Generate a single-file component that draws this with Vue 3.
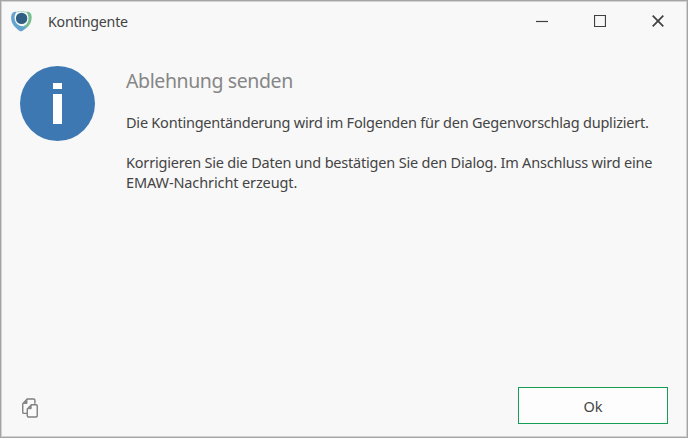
<script setup>
import { ref } from 'vue'

const title = ref('Kontingente')
const heading = ref('Ablehnung senden')
</script>

<template>
  <div class="dialog">
    <header class="titlebar">
      <svg class="logo" width="21" height="21" viewBox="0 0 21 21">
        <path d="M2 1.500C-.4 3.500-.4 8.500 1.200 12 3 16 6.500 18.200 9 20.200c1.500.3 2.600-.3 3.600-1.300 2-1 3.500-2.400 4-4.400-4.800 1.600-9.600.6-11.900-3.300C2.800 7.500 3.300 3.800 5.600.9 4 .5 2.900.8 2 1.500z" fill="#65a3cf" />
        <path d="M15 .9c2.500 2.400 3.200 6.400 1.900 9.800-.9 2.200-2.300 3.500-4.200 4.300l3.200 1.700c2-1.500 3.500-3.900 4.200-6.400 1-3.500.6-6.700-.9-8.500-.9-.9-2.500-1.400-4.200-.9z" fill="#76be91" />
        <path d="M5.500 1C8.500.1 12 .1 15.200 1.200" fill="none" stroke="#b9dcd5" stroke-width="1.200" />
        <circle cx="10.600" cy="7.400" r="5.700" fill="#315f84" />
      </svg>
      <span class="title">{{ title }}</span>
      <div class="controls">
        <button class="ctl" aria-label="Minimieren">
          <svg width="12" height="12" viewBox="0 0 12 12"><path d="M0 6.500h12" /></svg>
        </button>
        <button class="ctl" aria-label="Maximieren">
          <svg width="12" height="12" viewBox="0 0 12 12"><path d="M.5.5h11v11H.5z" /></svg>
        </button>
        <button class="ctl" aria-label="Schließen">
          <svg width="12" height="12" viewBox="0 0 12 12"><path class="cross" d="M.7.7l10.600 10.600M11.300.7L.7 11.300" /></svg>
        </button>
      </div>
    </header>

    <main class="body">
      <svg class="info" width="75" height="75" viewBox="0 0 75 75">
        <circle cx="37.500" cy="37.500" r="37.500" fill="#3e78b3" />
        <path d="M33 17h9v6h-9zM33 28h9v30h-9z" fill="#fff" />
      </svg>
      <div class="message">
        <h1>{{ heading }}</h1>
        <p class="first">Die Kontingentänderung wird im Folgenden für den Gegenvorschlag dupliziert.</p>
        <p class="second">Korrigieren Sie die Daten und bestätigen Sie den Dialog. Im Anschluss wird eine</p>
        <p class="third">EMAW-Nachricht erzeugt.</p>
      </div>
    </main>

    <footer class="footer">
      <button class="copy" aria-label="Kopieren">
        <svg width="16" height="20" viewBox="0 0 17 21">
          <path class="page" d="M5.500 16.200H2Q.8 16.200.8 15V6L5.500 1h7Q13.700 1 13.700 2.200V6" />
          <path class="fold" d="M.8 6.300L5.800 1v4.200q0 1.100-1.100 1.100z" />
          <path class="page" d="M10 7h5q1.200 0 1.200 1.200v10.600q0 1.200-1.200 1.200H6.800q-1.200 0-1.200-1.200V11.500z" />
          <path class="fold" d="M5.600 11.800L10.300 7v3.700q0 1.100-1.100 1.100z" />
        </svg>
      </button>
      <button class="ok">Ok</button>
    </footer>
  </div>
</template>

<style>
body {
  margin: 0;
}
</style>

<style scoped>
.dialog {
  box-sizing: border-box;
  width: 100%;
  height: 438px;
  display: flex;
  flex-direction: column;
  border: 1px solid #a4a4a4;
  box-shadow: inset 0 0 0 1px #d2d2d2;
  background: #f8f8f8;
  color: #444;
  font-family: 'Segoe UI', 'Noto Sans', sans-serif;
  font-size: 14.5px;
  letter-spacing: -0.225px;
}
button {
  padding: 0;
  border: 0;
  background: none;
  color: inherit;
  font: inherit;
}
svg {
  display: block;
}

/* title bar */
.titlebar {
  display: flex;
  align-items: center;
  height: 40px;
  padding-left: 10px;
}
.title {
  margin-left: 16px;
  font-size: 14.2px;
}
.controls {
  display: flex;
  margin-left: auto;
}
.ctl {
  display: flex;
  align-items: center;
  justify-content: center;
  width: 58px;
  height: 40px;
}
.ctl path {
  fill: none;
  stroke: #404040;
  stroke-width: 1.2;
}
.ctl .cross {
  stroke-width: 1.7;
}

/* message */
.body {
  flex: 1;
  display: flex;
  padding: 25px 20px 0 19px;
}
.info {
  flex: none;
}
.message {
  margin-left: 31px;
  white-space: nowrap;
}
h1 {
  margin: 1px 0 0;
  color: #868686;
  font-size: 19.5px;
  font-weight: 400;
  line-height: 28px;
  letter-spacing: -0.4px;
}
p {
  margin: 0;
  line-height: 20px;
}
.first {
  margin-top: 17px;
}
.second {
  margin-top: 20px;
  letter-spacing: -0.2px;
}
.third {
  letter-spacing: -0.12px;
}

/* footer */
.footer {
  display: flex;
  align-items: flex-end;
  justify-content: space-between;
  padding: 0 19px 13px 21px;
}
.copy {
  margin-bottom: 6px;
}
.page {
  fill: #fafafa;
  stroke: #808080;
  stroke-width: 1.5;
}
.fold {
  fill: #858585;
}
.ok {
  width: 150px;
  height: 37px;
  border: 1px solid #159c55;
  background: #fdfdfd;
}
</style>
